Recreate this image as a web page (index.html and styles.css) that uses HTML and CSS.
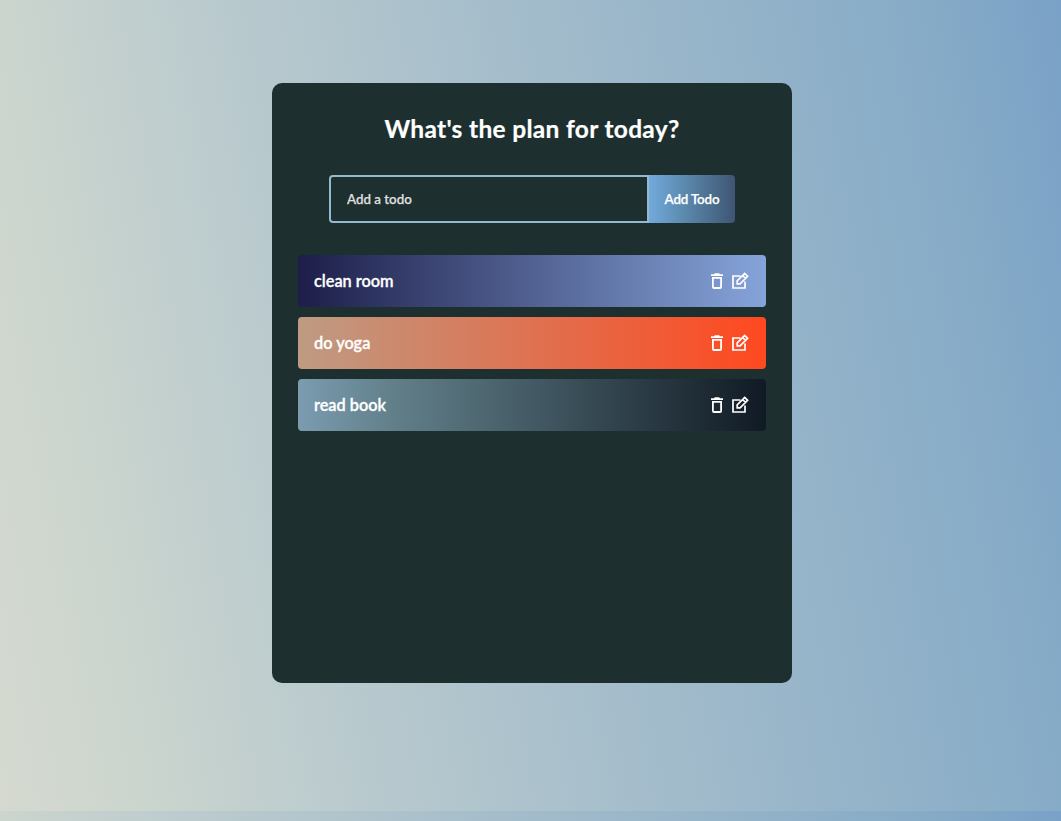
FILE: index.html
```html
<!DOCTYPE html>
<html lang="en">
<head>
<meta charset="utf-8">
<title>Todo</title>
<link rel="stylesheet" href="styles.css">
</head>
<body>
<svg class="sprite" aria-hidden="true">
  <symbol id="trash" viewBox="0 0 20 20"><path fill="currentColor" fill-rule="evenodd" d="M5 3.2h3L8.9 2.3h4.2l.9.9H17v1.9H5zM6 6h10v10a2 2 0 0 1-2 2H8a2 2 0 0 1-2-2zM7.8 7.8v8.3h6.4V7.8z"/></symbol>
  <symbol id="edit" viewBox="0 0 20 20"><g fill="none" stroke="currentColor" stroke-width="1.7"><path d="M10.5 5H3v12h12V10.5"/><path d="M7.2 12.8V9.9l7.5-7.5 2.9 2.9-7.5 7.5zM12.6 4.5l2.9 2.9"/></g></symbol>
</svg>
<main class="todo-app">
  <h1 class="title">What's the plan for today?</h1>
  <form class="todo-form">
    <input class="todo-input" type="text" placeholder="Add a todo">
    <button class="todo-button" type="button">Add Todo</button>
  </form>
  <div class="todo-row indigo"><span class="label">clean room</span><span class="icons"><svg class="icon"><use href="#trash"/></svg><svg class="icon"><use href="#edit"/></svg></span></div>
  <div class="todo-row orange"><span class="label">do yoga</span><span class="icons"><svg class="icon"><use href="#trash"/></svg><svg class="icon"><use href="#edit"/></svg></span></div>
  <div class="todo-row slate"><span class="label">read book</span><span class="icons"><svg class="icon"><use href="#trash"/></svg><svg class="icon"><use href="#edit"/></svg></span></div>
</main>
</body>
</html>
```
FILE: styles.css
```css
* { box-sizing: border-box; margin: 0; padding: 0; font-family: "Trebuchet MS", Lato, sans-serif; }
html { height: 811px; }
body { height: 811px; padding: 83px 0 0 3px; background: linear-gradient(80deg, #d5d9d0 0%, #cdd6ce 10%, #bbcbce 28%, #9db8ca 62%, #86abc7 89%, #7aa1c7 100%); }
.sprite { display: none; }
.todo-app { width: 520px; height: 600px; margin: 0 auto; border-radius: 10px; background: #1e2f2f; text-align: center; color: #fff; }
.title { padding-top: 29px; font-size: 24.5px; line-height: 34px; font-weight: 700; letter-spacing: 0.32px; -webkit-text-stroke: 0.2px currentColor; }
.todo-form { display: flex; width: 406px; height: 48px; margin: 29px auto 32px; }
.todo-input { width: 320px; padding: 0 16px; border: 2px solid #93bad1; border-radius: 4px 0 0 4px; background: transparent; color: #fff; font-size: 13.33px; font-weight: 500; outline: none; }
.todo-input::placeholder { color: #e2e2e2; opacity: 1; -webkit-text-stroke: 0.25px currentColor; }
.todo-button { width: 86px; border: 0; border-radius: 0 4px 4px 0; background: linear-gradient(90deg, #72aadc 0%, #5986a9 45%, #3f5573 100%); color: #fff; font-size: 13.33px; font-weight: 600; letter-spacing: -0.15px; white-space: nowrap; -webkit-text-stroke: 0.25px currentColor; }
.todo-row { display: flex; align-items: center; justify-content: space-between; width: 468px; height: 52px; margin: 0 auto 10px; padding: 0 16px; border-radius: 4px; font-size: 16.3px; font-weight: 600; }
.label { padding-bottom: 2px; -webkit-text-stroke: 0.3px currentColor; }
.indigo { background: linear-gradient(90deg, #1d1e49, #86a4da); }
.orange { background: linear-gradient(90deg, #be9b83, #ff481f); }
.slate { background: linear-gradient(90deg, #7b9cb1 0%, #62808a 20%, #101a24 100%); }
.icons { display: flex; gap: 4px; }
.icon { width: 20px; height: 20px; }
```
